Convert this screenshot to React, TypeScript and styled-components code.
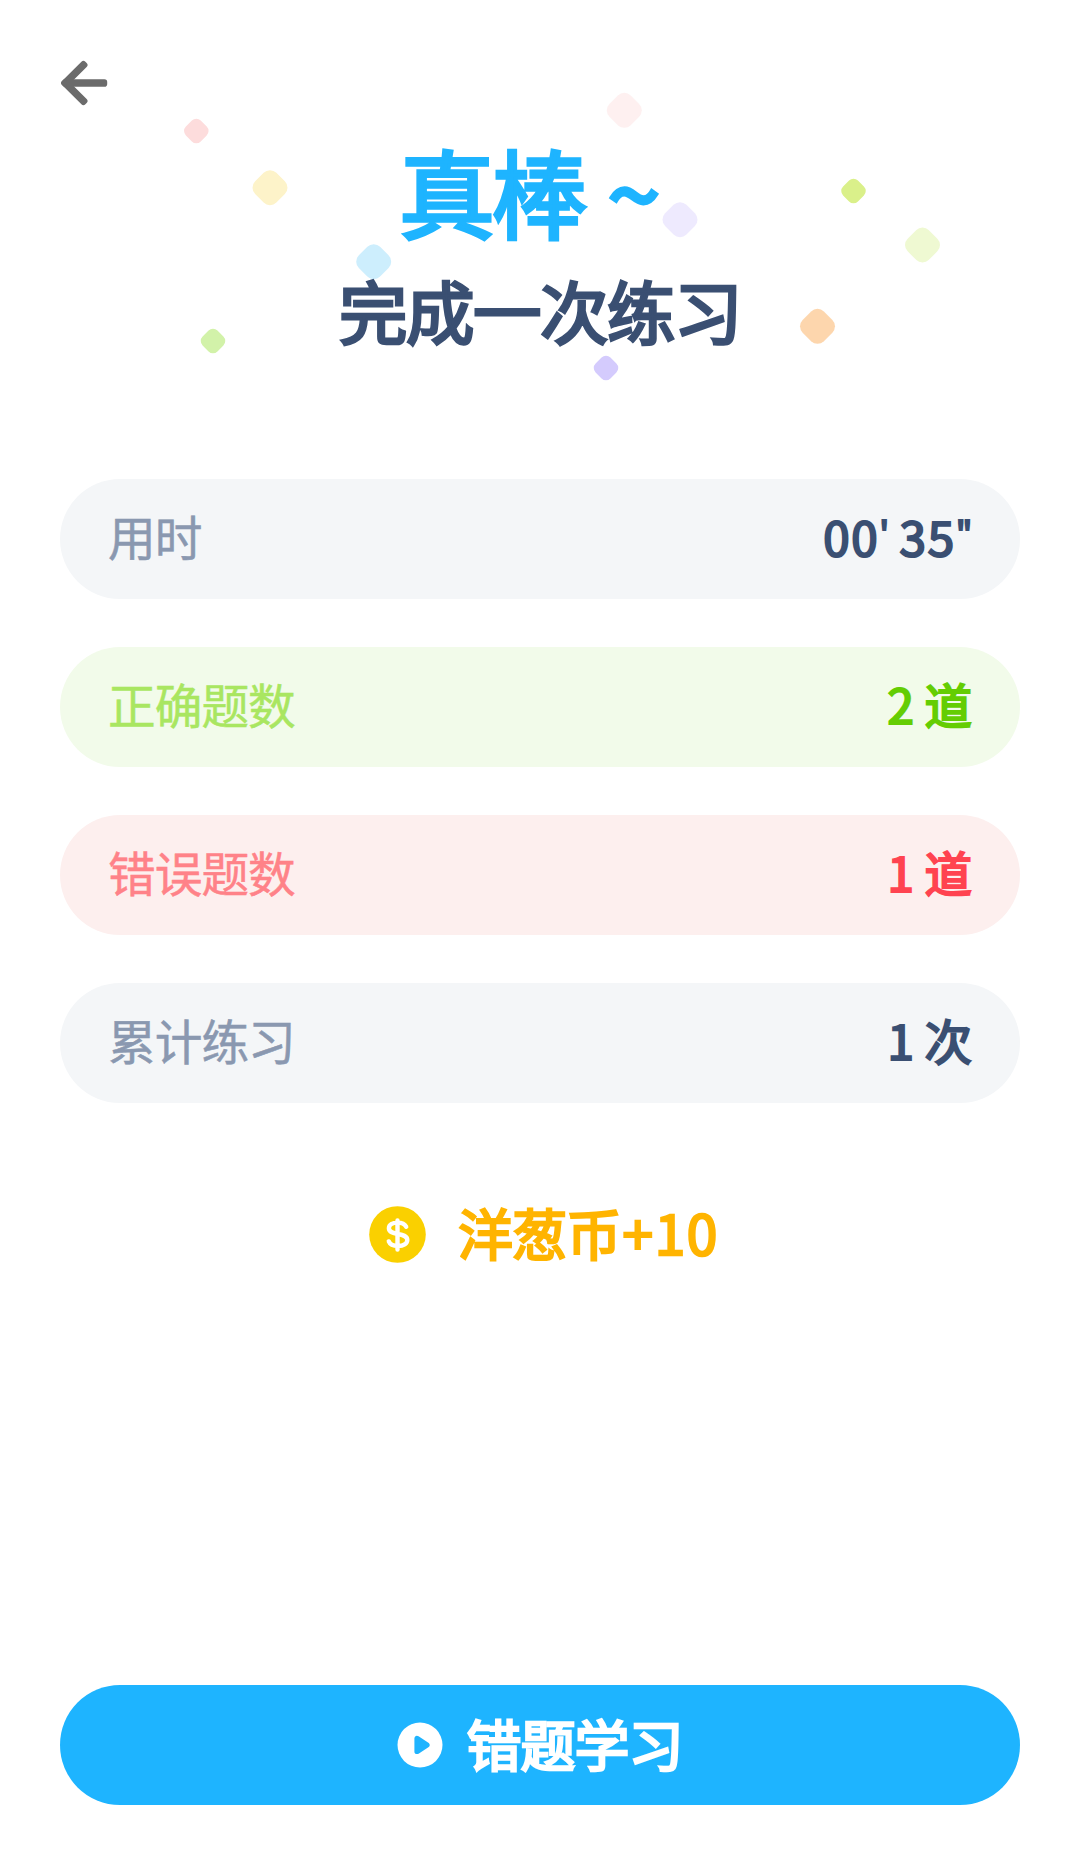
import React from 'react';
import styled, { createGlobalStyle } from 'styled-components';

const GlobalStyle = createGlobalStyle`
  * { box-sizing: border-box; }
  body { margin: 0; background: #fff; }
  h1, h2 { margin: 0; }
`;

const Screen = styled.main`
  position: relative;
  display: flex;
  flex-direction: column;
  width: 1080px;
  height: 1864px;
  padding: 60px 60px 59px;
  background: #fff;
  font-family: "Noto Sans CJK SC", sans-serif;
`;

const Confetti = styled.svg`
  position: absolute;
  top: 0;
  left: 0;
`;

const BackButton = styled.button`
  display: flex;
  width: 48px;
  height: 46px;
  padding: 0;
  border: 0;
  background: none;
`;

const Hero = styled.header`
  position: relative;
  display: flex;
  flex-direction: column;
  align-items: center;
  height: 373px;
  padding-top: 28px;
`;

const Title = styled.h1`
  display: flex;
  align-items: center;
  gap: 23px;
  height: 112px;
  padding-right: 24px;
  color: #1eb4ff;
  font-size: 96px;
  font-weight: 400;
  letter-spacing: -3.4px;
  line-height: 112px;
  -webkit-text-stroke: 3.6px #1eb4ff;
`;

const Subtitle = styled.h2`
  height: 82px;
  margin-top: 23px;
  color: #3a4f72;
  font-size: 68.5px;
  font-weight: 400;
  letter-spacing: -1.5px;
  line-height: 82px;
  -webkit-text-stroke: 3px #3a4f72;
`;

const Stats = styled.section`
  display: flex;
  flex-direction: column;
  gap: 48px;
`;

const StatRow = styled.div<{ $bg: string }>`
  display: flex;
  align-items: center;
  justify-content: space-between;
  height: 120px;
  padding: 0 48px 7px;
  border-radius: 60px;
  background: ${(p) => p.$bg};
`;

const Label = styled.span<{ $color: string }>`
  color: ${(p) => p.$color};
  font-size: 47.7px;
  font-weight: 400;
  letter-spacing: -1px;
  line-height: 60px;
  -webkit-text-stroke: 0.5px ${(p) => p.$color};
`;

const Value = styled.span<{ $color: string }>`
  color: ${(p) => p.$color};
  font-size: 47.5px;
  font-weight: 400;
  line-height: 60px;
  white-space: pre;
  -webkit-text-stroke: 2.2px ${(p) => p.$color};
`;

const Digits = styled.span`
  letter-spacing: 1.8px;
`;

const Tick = styled.span`
  display: inline-block;
  font-size: 34px;
  line-height: 40px;
  vertical-align: 10px;
`;

const Reward = styled.div`
  display: flex;
  align-items: center;
  justify-content: center;
  gap: 32px;
  height: 70px;
  margin-top: 96px;
  padding-left: 8px;
  color: #ffb400;
`;

const RewardText = styled.span`
  margin-top: -7px;
  font-size: 55px;
  font-weight: 400;
  letter-spacing: -0.8px;
  line-height: 70px;
  -webkit-text-stroke: 2.4px #ffb400;
`;

const Amount = styled.span`
  padding-left: 2px;
  letter-spacing: 1.6px;
`;

const StudyButton = styled.button`
  display: flex;
  align-items: center;
  justify-content: center;
  gap: 23px;
  width: 100%;
  height: 120px;
  margin-top: auto;
  padding: 0;
  border: 0;
  border-radius: 60px;
  background: #1eb4ff;
  color: #fff;
  font-family: inherit;
`;

const StudyText = styled.span`
  margin-top: -7px;
  font-size: 55px;
  font-weight: 400;
  letter-spacing: -1px;
  line-height: 70px;
  -webkit-text-stroke: 2.6px #fff;
`;

const pieces = [
  { x: 196.3, y: 131, s: 21, color: '#fddcdc' },
  { x: 270, y: 187.7, s: 30, color: '#fdf3c9' },
  { x: 373.7, y: 261.7, s: 30, color: '#cdeefd' },
  { x: 213, y: 341, s: 21, color: '#d2f2a9' },
  { x: 624.3, y: 110.3, s: 30, color: '#fef0f0' },
  { x: 680, y: 219.7, s: 30, color: '#eeeafe' },
  { x: 606, y: 368, s: 21, color: '#d4cbfd' },
  { x: 853.5, y: 191, s: 21, color: '#daf08a' },
  { x: 922.5, y: 245, s: 30, color: '#eff9d2' },
  { x: 817.5, y: 326.3, s: 30, color: '#fdd6ad' },
];

const duration = (
  <>
    <Digits>00</Digits>
    <Tick>'</Tick> <Digits>35</Digits>
    <Tick>"</Tick>
  </>
);

const stats = [
  { label: '用时', value: duration, bg: '#f4f6f8', ink: '#8a98b0', strong: '#3a4f72' },
  { label: '正确题数', value: '2 道', bg: '#f2fbea', ink: '#a9e661', strong: '#64cd03' },
  { label: '错误题数', value: '1 道', bg: '#fdefee', ink: '#ff8288', strong: '#ff4350' },
  { label: '累计练习', value: '1 次', bg: '#f4f6f8', ink: '#8a98b0', strong: '#3a4f72' },
];

export default function App() {
  return (
    <>
      <GlobalStyle />
      <Screen>
        <Confetti width="1080" height="420" aria-hidden="true">
          {pieces.map((p) => (
            <rect
              key={`${p.x}-${p.y}`}
              x={p.x - p.s / 2}
              y={p.y - p.s / 2}
              width={p.s}
              height={p.s}
              rx={p.s * 0.3}
              fill={p.color}
              transform={`rotate(45 ${p.x} ${p.y})`}
            />
          ))}
        </Confetti>
        <BackButton aria-label="返回">
          <svg width="48" height="46" viewBox="0 0 48 46" fill="#6b6b6b">
            <rect x="1.6" y="19.3" width="33" height="7.4" rx="2.8" transform="rotate(-45 5.3 23)" />
            <rect x="1.6" y="19.3" width="33" height="7.4" rx="2.8" transform="rotate(45 5.3 23)" />
            <rect x="6" y="19.3" width="41.2" height="7.4" rx="2.8" />
          </svg>
        </BackButton>
        <Hero>
          <Title>
            <span>真棒</span>
            <span>~</span>
          </Title>
          <Subtitle>完成一次练习</Subtitle>
        </Hero>
        <Stats>
          {stats.map((s) => (
            <StatRow key={s.label} $bg={s.bg}>
              <Label $color={s.ink}>{s.label}</Label>
              <Value $color={s.strong}>{s.value}</Value>
            </StatRow>
          ))}
        </Stats>
        <Reward>
          <svg width="57" height="57" viewBox="0 0 57 57" fill="none">
            <circle cx="28.5" cy="28.5" r="28.3" fill="#fad000" />
            <path
              d="M37.2 20.8c-1.2-2.4-4.4-4.2-8.7-4.2-5 0-8.6 2.2-8.6 5.7 0 8 18.4 3.4 18.4 11.6 0 3.6-4 6.1-9.1 6.1-4.6 0-8.3-1.8-9.4-4.6M28.5 14.5v29"
              stroke="#fff"
              strokeWidth="4.4"
              strokeLinecap="round"
            />
          </svg>
          <RewardText>
            洋葱币<Amount>+10</Amount>
          </RewardText>
        </Reward>
        <StudyButton>
          <svg width="46" height="46" viewBox="0 0 46 46">
            <circle cx="23" cy="23" r="22.5" fill="#fff" />
            <path d="M20.1 16.6v12.8l9.8-6.4z" fill="#1eb4ff" stroke="#1eb4ff" strokeWidth="5.4" strokeLinejoin="round" />
          </svg>
          <StudyText>错题学习</StudyText>
        </StudyButton>
      </Screen>
    </>
  );
}
